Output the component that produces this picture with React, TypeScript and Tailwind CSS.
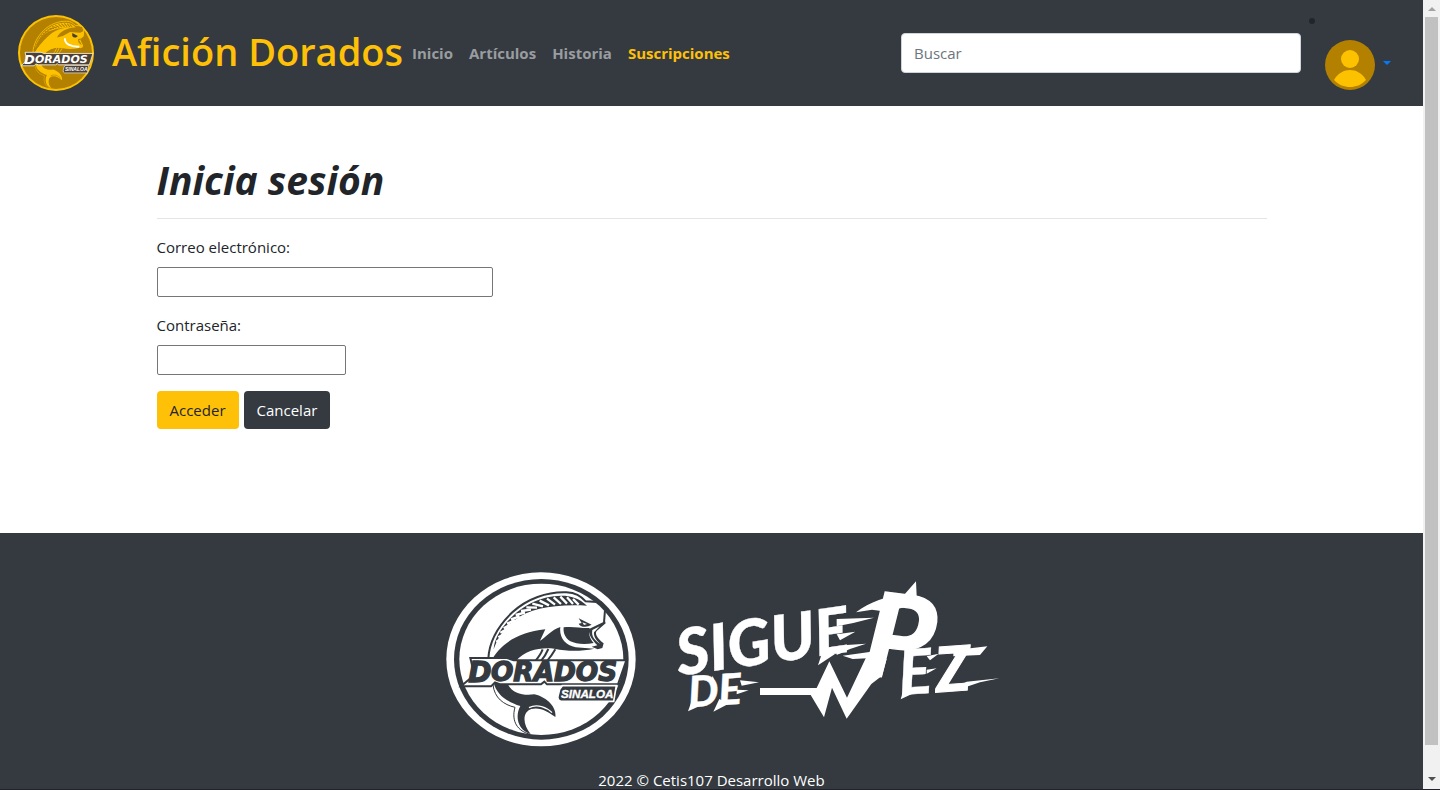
import React from "react";

type Tone = { ring: string; dark: string; light: string };

function Fish({ dark, light }: { dark: string; light: string }) {
  return (
    <g>
      <path
        d="M174 296C177 240 205 196 246 157C290 116 350 95 408 97C436 98 450 108 466 124L512 127L524 150L521 188"
        fill="none"
        stroke={dark}
        strokeWidth="6"
      />
      <path
        d="M190 268C202 232 222 204 254 179C300 146 370 132 470 137C440 108 405 104 370 109C310 116 262 150 232 184C206 214 192 240 190 268Z"
        fill={dark}
      />
      <path
        d="M198 246L214 234M204 232L222 222M210 218L232 206M220 205L242 193M230 191L254 181M242 178L268 169M256 165L284 158M272 153L302 149M288 142L320 143M306 131L338 139M328 122L356 136M350 116L374 134M370 112L392 132M390 110L410 131M410 112L428 132M428 117L445 134"
        stroke={light}
        strokeWidth="7"
        fill="none"
      />
      <path
        d="M182 304C206 256 260 216 345 208L329 242C345 234 364 208 390 201C386 232 404 256 436 262L492 266C450 274 414 274 372 266C330 262 288 268 256 304Z"
        fill={dark}
      />
      <path d="M400 202C430 198 455 206 478 204C474 218 476 232 490 249C464 254 436 252 420 244C404 234 398 218 400 202Z" fill={dark} />
      <path d="M476 207L524 184L526 190L500 212C492 220 500 234 520 250L516 264L502 268L484 260L501 256C484 238 474 224 476 207Z" fill={dark} />
      <path d="M486 210L508 199L491 217C489 230 500 244 510 252C494 242 482 230 486 210Z" fill={light} />
      <path d="M445 175L484 194L474 199C460 203 448 198 445 191L454 189Z" fill={dark} />
      <path d="M456 187L470 192L461 195Z" fill={light} />
      <path d="M337 268C331 284 324 292 314 304M354 267C347 284 341 292 331 304M375 268C366 284 360 292 349 304" stroke={dark} strokeWidth="6" fill="none" />
      <path
        d="M190 368C198 400 224 424 270 438C254 466 260 510 301 522C276 492 276 456 303 447C330 440 354 456 375 471C380 438 344 410 312 403C278 408 244 400 230 368Z"
        fill={dark}
      />
      <path d="M188 374C192 414 220 434 254 442C242 484 262 514 300 523" fill="none" stroke={dark} strokeWidth="3" />
      <path d="M296 443C320 430 350 442 365 458" fill="none" stroke={light} strokeWidth="4" />
    </g>
  );
}

const banner = "M120 294H230L250 301H588L563 373H350L342 365L332 373H210L194 367L182 379H92L132 345Z";
const tag = "M396 377H558L550 424H392Q380 420 383 408L388 388Z";

function FooterCrest() {
  const tone: Tone = { ring: "#ffffff", dark: "#343a40", light: "#ffffff" };
  return (
    <svg viewBox="47 36 570 525" className="h-[175px] w-[190px]" role="img" aria-label="Dorados Sinaloa">
      <ellipse cx="332" cy="298" rx="284" ry="261" fill={tone.ring} />
      <ellipse cx="333" cy="298" rx="262" ry="241" fill={tone.dark} />
      <ellipse cx="333" cy="298" rx="246" ry="227" fill={tone.light} />
      <Fish dark={tone.dark} light={tone.light} />
      <path d={banner} fill={tone.light} stroke={tone.dark} strokeWidth="6" />
      <path d={tag} fill={tone.dark} stroke={tone.light} strokeWidth="5" />
      <g fill={tone.dark} stroke={tone.dark} strokeWidth="4" fontStyle="italic" fontWeight="700">
        <text x="114" y="365" fontSize="84" fontFamily="DejaVu Sans, sans-serif">D</text>
        <text x="182" y="363" fontSize="79" fontFamily="DejaVu Sans, sans-serif">ORADOS</text>
      </g>
      <text x="392" y="414" fontSize="35" fill={tone.light} stroke={tone.light} strokeWidth="1" fontStyle="italic" fontWeight="700" fontFamily="Liberation Sans, sans-serif">
        SINALOA
      </text>
    </svg>
  );
}

function HeaderCrest() {
  return (
    <svg viewBox="0 0 76 76" className="size-[76px]" aria-hidden="true">
      <circle cx="38" cy="38" r="38" fill="#fcc200" />
      <circle cx="38" cy="38" r="36" fill="#b38000" />
      <g transform="translate(-10.3 -9.1) scale(0.145 0.158)">
        <Fish dark="#fcc200" light="#b38000" />
        <path d="M466 137C400 128 320 150 270 200C230 236 206 262 186 300H256C288 268 330 262 372 266L492 266L520 250L500 212L524 184V160Z" fill="#fcc200" />
        <path d="M466 137L512 132L520 160L500 170L430 165L380 190L340 200C360 160 410 140 466 137Z" fill="#b38000" />
        <path d="M445 172L484 190L474 199C460 203 448 198 445 191Z" fill="#4a4038" />
        <path d="M394 204C394 240 430 260 494 258" fill="none" stroke="#fff" strokeWidth="12" />
        <path d="M486 210L516 204L492 217L512 248C494 242 482 230 486 210Z" fill="#b38000" />
        <path d={banner} fill="#4a4038" stroke="#fff" strokeWidth="5" />
        <path d={tag} fill="#4a4038" stroke="#fff" strokeWidth="4" />
      </g>
      <g fill="#fff" fontStyle="italic" fontWeight="700">
        <text x="6" y="49" fontSize="13" fontFamily="DejaVu Sans, sans-serif">D</text>
        <text x="17" y="48" fontSize="11" fontFamily="DejaVu Sans, sans-serif">ORADOS</text>
        <text x="47" y="56" fontSize="5" fontFamily="Liberation Sans, sans-serif">SINALOA</text>
      </g>
    </svg>
  );
}

function PulseLogo() {
  return (
    <svg viewBox="30 36 960 417" className="mt-[9px] h-[139px] w-[320px] overflow-visible" role="img" aria-label="Sigue de Pez">
      <g fill="#fff" stroke="#fff" strokeLinejoin="miter" fontFamily="Lato, sans-serif" fontWeight="900" fontStyle="italic">
        <text transform="translate(28 320) rotate(-8)" fontSize="192" strokeWidth="1">SIGUE</text>
        <text transform="translate(572 316) rotate(7)" fontSize="350" strokeWidth="4">P</text>
        <text transform="translate(690 378) rotate(-4)" fontSize="186" strokeWidth="1">E</text>
        <text transform="translate(800 370) rotate(-4)" fontSize="186" strokeWidth="3">Z</text>
        <text transform="translate(58 415) rotate(-4)" fontSize="128" strokeWidth="1">DE</text>
      </g>
      <g fill="#fff">
        <path d="M270 357H440L478 277L531 386L590 262L650 270L636 320L604 345L530 449L486 356L462 445L422 378H270Z" />
        <path d="M558 130C600 98 650 82 704 76L738 37L740 80L720 110L650 128L606 122Z" />
        <path d="M518 260L620 246L610 278L588 275L592 268L548 270Z" />
        <path d="M500 150L612 146L550 162L500 172ZM500 196L556 188L510 214ZM500 244L530 228L588 224L540 240L500 258Z" />
        <path d="M840 364L890 338L988 328L930 340L870 360ZM850 244L952 232L930 258L850 262ZM770 262L806 254L780 274ZM770 302L800 298L770 314Z" />
        <path d="M68 388L54 427L96 408ZM148 390L130 428L176 404ZM210 334L267 340L215 350ZM200 362L236 364L200 376ZM460 240L444 289L494 256ZM704 350L692 391L732 372Z" />
        <path d="M120 348L128 320L138 348Z" />
      </g>
    </svg>
  );
}

function Avatar() {
  return (
    <svg viewBox="0 0 50 50" className="size-[50px]" aria-hidden="true">
      <circle cx="25" cy="25" r="25" fill="#b38000" />
      <circle cx="25" cy="19" r="9" fill="#fcc200" />
      <path d="M9 40C13 33 19 30 25 30S37 33 41 40C36 45 31 47 25 47S14 45 9 40Z" fill="#fcc200" />
    </svg>
  );
}

const links = [
  { label: "Inicio", style: "text-[#9a9da0]" },
  { label: "Artículos", style: "text-[#9a9da0]" },
  { label: "Historia", style: "text-[#9a9da0]" },
  { label: "Suscripciones", style: "text-[#ffc107]" },
];

function Header() {
  return (
    <header className="flex h-[106px] items-center bg-[#343a40] pr-8 pl-[18px]">
      <a href="#inicio" className="flex items-center gap-[18px] whitespace-nowrap text-[#ffc107]">
        <HeaderCrest />
        <span className="pb-1 text-[38px] font-semibold">Afición Dorados</span>
      </a>
      <nav className="ml-[9px] flex gap-4 text-[15px] font-bold">
        {links.map((link) => (
          <a key={link.label} href={"#" + link.label.toLowerCase()} className={link.style}>
            {link.label}
          </a>
        ))}
      </nav>
      <form className="ml-auto w-[400px]">
        <input
          type="search"
          aria-label="Buscar"
          placeholder="Buscar"
          className="h-10 w-full rounded border border-[#ced4da] bg-white px-3 text-[15px] placeholder:text-[#6c757d]"
        />
      </form>
      <div className="relative ml-6 pt-6">
        <span className="absolute top-0.5 -left-4 size-[6px] rounded-full bg-[#212529]" />
        <button type="button" aria-label="Menú de usuario" className="flex items-center gap-2">
          <Avatar />
          <svg viewBox="0 0 8 4" className="mb-1 h-1 w-2" aria-hidden="true">
            <path d="M0 0H8L4 4Z" fill="#007bff" />
          </svg>
        </button>
      </div>
    </header>
  );
}

function LoginForm() {
  return (
    <main className="mx-auto w-full max-w-[1140px] px-[15px] pt-[50px] pb-[104px]">
      <h1 className="border-b border-[#e5e5e5] pb-[14px] text-[39px] leading-[48px] font-bold italic">Inicia sesión</h1>
      <form className="mt-4 flex flex-col items-start text-[15px] leading-6">
        <label htmlFor="email" className="mb-2">Correo electrónico:</label>
        <input id="email" type="email" className="mb-4 h-[30px] w-[336px] rounded-xs border border-[#767676] px-1" />
        <label htmlFor="password" className="mb-2">Contraseña:</label>
        <input id="password" type="password" className="mb-4 h-[30px] w-[189px] rounded-xs border border-[#767676] px-1" />
        <div className="flex gap-[5px]">
          <button type="submit" className="h-[38px] rounded bg-[#ffc107] px-[13px]">Acceder</button>
          <button type="button" className="h-[38px] rounded bg-[#343a40] px-[13px] text-white">Cancelar</button>
        </div>
      </form>
    </main>
  );
}

function Footer() {
  return (
    <footer className="bg-[#343a40] pt-[39px] text-center text-white">
      <div className="flex items-start justify-center gap-11 pl-[22px]">
        <FooterCrest />
        <PulseLogo />
      </div>
      <p className="mt-[25px] text-[15px] leading-4">2022 © Cetis107 Desarrollo Web</p>
    </footer>
  );
}

function ScrollRail() {
  return (
    <div className="flex w-[17px] shrink-0 flex-col items-center bg-[#f1f1f1]" aria-hidden="true">
      <div className="flex h-[17px] items-center">
        <svg viewBox="0 0 8 4" className="h-1 w-2">
          <path d="M0 4H8L4 0Z" fill="#a3a3a3" />
        </svg>
      </div>
      <div className="w-[13px] grow bg-[#c1c1c1]" />
      <div className="flex h-11 items-end pb-2">
        <svg viewBox="0 0 8 4" className="h-1 w-2">
          <path d="M0 0H8L4 4Z" fill="#505050" />
        </svg>
      </div>
    </div>
  );
}

export default function App() {
  return (
    <div className="flex h-screen border-b border-[#22222c] bg-white font-['Open_Sans','Noto_Sans',sans-serif] text-[#212529]">
      <div className="min-w-0 grow overflow-y-auto bg-[#343a40] [scrollbar-width:none]">
        <Header />
        <div className="bg-white">
          <LoginForm />
        </div>
        <Footer />
      </div>
      <ScrollRail />
    </div>
  );
}
